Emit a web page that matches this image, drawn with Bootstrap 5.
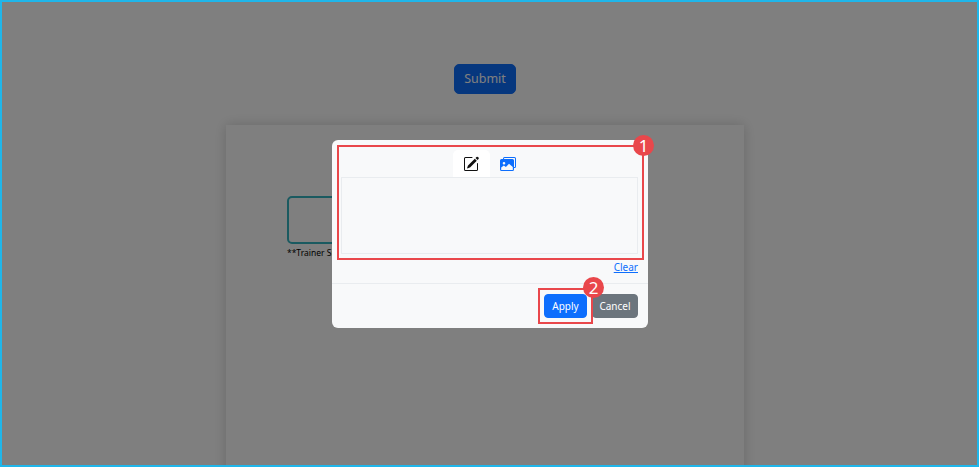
<!DOCTYPE html>
<html lang="en">
<head>
  <meta charset="UTF-8">
  <title>Signature dialog</title>
  <link href="https://cdn.jsdelivr.net/npm/bootstrap@5.3.0/dist/css/bootstrap.min.css" rel="stylesheet">
  <style>
  html, body { height: 100%; overflow: hidden; background: #fff; }
  body { font-family: "Noto Sans", "Open Sans", sans-serif; }
  .page-frame {
    position: relative;
    height: 467px;
    border: 2px solid #1fb6ea;
    overflow: hidden;
    background: #fff;
  }
  .submit-row { padding-right: 9px; }
  .submit-btn {
    width: 62px;
    height: 30px;
    margin-top: 62px;
    padding: 0;
    font-size: 12.5px;
    border-radius: 5px;
  }
  .sheet {
    width: 518px;
    height: 400px;
    margin: 31px 0 0 224px;
    padding: 71px 0 0 61px;
    background: #fff;
    box-shadow: 0 0 12px rgba(0, 0, 0, .18);
  }
  .sign-box {
    width: 300px;
    height: 48px;
    border: 2px solid #34b4c0;
    border-radius: 5px;
  }
  .sign-note { margin-top: 3px; font-size: 8.5px; line-height: 12px; color: #000; }
  .backdrop-layer { position: absolute; inset: 0; background: rgba(0, 0, 0, .5); }
  .sign-dialog {
    position: absolute;
    left: 330px;
    top: 138px;
    width: 316px;
    height: 188px;
    background: #f8f9fa;
    border: 0;
    border-radius: 6px;
  }
  .tab-row { height: 37px; padding-top: 10px; }
  .tab-item {
    width: 37px;
    height: 27px;
    padding-right: 2px;
    border-radius: 5px 5px 0 0;
  }
  .tab-item.on { background: #fff; }
  .draw-area {
    height: 77px;
    margin: 0 10px 0 9px;
    border: 1px solid #e9ecef;
    background: #f8f9fa;
  }
  .clear-row { height: 29px; padding: 6px 10px 0 0; font-size: 10px; line-height: 15px; }
  .dialog-foot {
    height: 45px;
    padding: 10px 10px 0 0;
    border-top: 1px solid #e9ecef;
    gap: 5px;
  }
  .dialog-btn { height: 24px; padding: 0; font-size: 10px; border-radius: 4px; }
  .btn-apply { width: 43px; }
  .btn-cancel { width: 46px; }
  .mark-box { position: absolute; border: 2px solid #e9474b; }
  .mark-one { left: 335px; top: 143px; width: 307px; height: 115px; }
  .mark-two { left: 536px; top: 286px; width: 55px; height: 36px; }
  .step-dot {
    position: absolute;
    width: 21px;
    height: 21px;
    border-radius: 50%;
    background: #e9474b;
    color: #fff;
    font-size: 17px;
    line-height: 21px;
    text-align: center;
  }
  .dot-one { left: 631px; top: 133px; }
  .dot-two { left: 581px; top: 275px; }
  </style>
</head>
<body>
  <div class="page-frame">
    <div class="submit-row text-center">
      <button type="button" class="btn btn-primary submit-btn">Submit</button>
    </div>
    <div class="sheet">
      <div class="sign-box"></div>
      <div class="sign-note">**Trainer Signature</div>
    </div>

    <div class="backdrop-layer"></div>

    <div class="sign-dialog d-flex flex-column">
      <div class="tab-row d-flex justify-content-center">
        <div class="tab-item on d-flex align-items-center justify-content-center">
          <svg width="16" height="16" viewBox="0 0 16 16" fill="#111">
            <path d="M15.500 1.600a1 1 0 0 1 0 1.400l-1 1-2-2 1-1a1 1 0 0 1 1.400 0zM13.800 4.700l-2-2-6.800 6.800a.5.5 0 0 0-.1.2l-.8 2.400a.3.3 0 0 0 .3.3l2.400-.8a.5.5 0 0 0 .2-.1z"/>
            <path fill-rule="evenodd" d="M1 13.500A1.500 1.500 0 0 0 2.500 15h11a1.500 1.500 0 0 0 1.500-1.500v-6a.5.5 0 0 0-1 0v6a.5.5 0 0 1-.5.5h-11a.5.5 0 0 1-.5-.5v-11a.5.5 0 0 1 .5-.5H9a.5.5 0 0 0 0-1H2.500A1.500 1.500 0 0 0 1 2.500z"/>
          </svg>
        </div>
        <div class="tab-item d-flex align-items-center justify-content-center">
          <svg width="16" height="16" viewBox="0 0 16 16" fill="#0d6efd">
            <path d="M4.500 1A1.500 1.500 0 0 0 3 2.500V3h1v-.5a.5.5 0 0 1 .5-.5h10a.5.5 0 0 1 .5.5v8a.5.5 0 0 1-.5.5H14v1h.5a1.500 1.500 0 0 0 1.500-1.500v-8A1.500 1.500 0 0 0 14.500 1z"/>
            <path d="M1.500 3A1.500 1.500 0 0 0 0 4.500v9A1.500 1.500 0 0 0 1.500 15h11a1.500 1.500 0 0 0 1.500-1.500v-9A1.500 1.500 0 0 0 12.500 3zM4 6a1.300 1.300 0 1 1 0 2.600A1.300 1.300 0 0 1 4 6zm-2.800 8 .01-2.600 2.600-1.900 2.100 1.400 3.100-3.100 3.800 3.300V14z"/>
          </svg>
        </div>
      </div>
      <div class="draw-area"></div>
      <div class="clear-row text-end"><a href="#">Clear</a></div>
      <div class="dialog-foot d-flex justify-content-end">
        <button type="button" class="btn btn-primary dialog-btn btn-apply">Apply</button>
        <button type="button" class="btn btn-secondary dialog-btn btn-cancel">Cancel</button>
      </div>
    </div>

    <div class="mark-box mark-one"></div>
    <div class="mark-box mark-two"></div>
    <div class="step-dot dot-one">1</div>
    <div class="step-dot dot-two">2</div>
  </div>
  <script src="https://cdn.jsdelivr.net/npm/bootstrap@5.3.0/dist/js/bootstrap.bundle.min.js"></script>
</body>
</html>
